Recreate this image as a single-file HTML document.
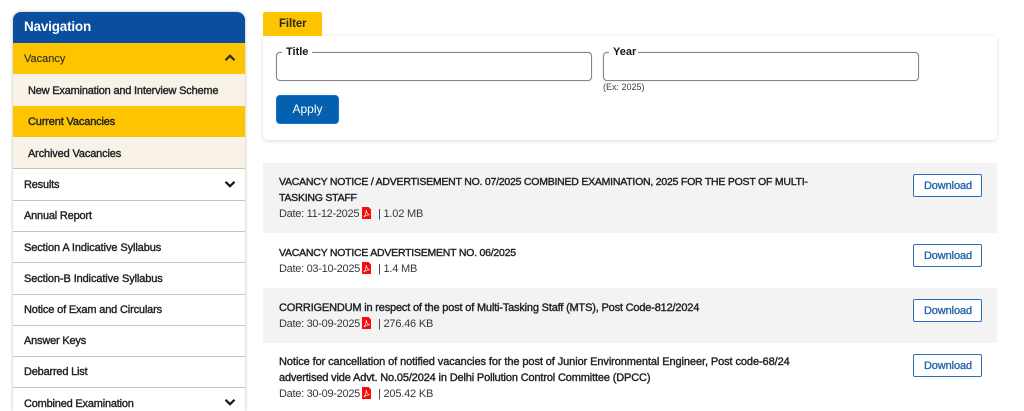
<!DOCTYPE html>
<html lang="en">
<head>
<meta charset="utf-8">
<title>Vacancy</title>
<style>
html,body{margin:0;padding:0;background:#fff}
body{width:1024px;height:411px;overflow:hidden;position:relative;font-family:"Liberation Sans",sans-serif;color:#212529}
.a{position:absolute}
.t{position:absolute;white-space:nowrap;line-height:14px}
.nav{font-size:11px;color:#212529;letter-spacing:-.2px;-webkit-text-stroke:.4px #212529}
.side{position:absolute;left:13px;top:12px;width:232px;height:399px;overflow:hidden;border-radius:8px 8px 0 0;box-shadow:0 0 3px rgba(0,0,0,.3)}
.line{position:absolute;left:13px;width:232px;height:1px;background:#c4c4c4}
.row{position:absolute;left:263px;width:734px}
.ti{font-size:11px;color:#212529;letter-spacing:-.15px;-webkit-text-stroke:.4px #212529}
.caps{font-size:10.5px;letter-spacing:-.23px}
.m{font-size:11px;color:#33383d;letter-spacing:-.29px}
.btn{position:absolute;left:913px;width:66px;height:21px;padding-left:1px;border:1px solid #2f6db5;border-radius:2px;background:#fff;color:#2565ad;font-size:11px;text-align:center;line-height:23px;letter-spacing:-.1px;-webkit-text-stroke:.35px #2565ad;box-sizing:content-box}
.fs{position:absolute;height:27px;width:314px;border:1px solid #80858a;border-radius:4px;background:#fff;box-shadow:0 0 1px rgba(128,133,138,.6)}
.pdf{position:absolute;width:9px;height:12px}
</style>
</head>
<body>

<div class="side"></div>
<div class="a" style="left:13px;top:12px;width:232px;height:31px;background:#0a4f9e;border-radius:8px 8px 0 0"></div>
<div class="t" style="left:24px;top:20px;font-size:13.5px;font-weight:700;color:#fff;letter-spacing:-.2px">Navigation</div>

<div class="a" style="left:13px;top:43px;width:232px;height:31px;background:#ffc400"></div>
<div class="t" style="left:24px;top:52px;font-size:11px;color:#3b3a20;-webkit-text-stroke:.2px #3b3a20">Vacancy</div>
<svg class="a" style="left:224px;top:54px" width="12" height="8" viewBox="0 0 12 8"><path d="M1.500 6.200L6 1.800l4.500 4.400" fill="none" stroke="#2b2a14" stroke-width="2.200"/></svg>

<div class="a" style="left:13px;top:74px;width:232px;height:32px;background:#f9f3e7"></div>
<div class="t nav" style="left:28px;top:84px">New Examination and Interview Scheme</div>
<div class="a" style="left:13px;top:106px;width:232px;height:31px;background:#ffc400"></div>
<div class="t nav" style="left:28px;top:115px;letter-spacing:-.15px">Current Vacancies</div>
<div class="a" style="left:13px;top:137px;width:232px;height:31px;background:#f9f3e7"></div>
<div class="t nav" style="left:28px;top:147px;letter-spacing:-.15px">Archived Vacancies</div>
<div class="line" style="top:168px"></div>

<div class="a" style="left:13px;top:169px;width:232px;height:242px;background:#fff"></div>
<div class="t nav" style="left:24px;top:178px">Results</div>
<svg class="a" style="left:224px;top:180px" width="12" height="8" viewBox="0 0 12 8"><path d="M1.500 1.800L6 6.200l4.500-4.400" fill="none" stroke="#17181a" stroke-width="2.200"/></svg>
<div class="line" style="top:200px"></div>
<div class="t nav" style="left:24px;top:209px">Annual Report</div>
<div class="line" style="top:231px"></div>
<div class="t nav" style="left:24px;top:241px;letter-spacing:-.1px">Section A Indicative Syllabus</div>
<div class="line" style="top:262px"></div>
<div class="t nav" style="left:24px;top:272px;letter-spacing:-.11px">Section-B Indicative Syllabus</div>
<div class="line" style="top:294px"></div>
<div class="t nav" style="left:24px;top:303px;letter-spacing:-.16px">Notice of Exam and Circulars</div>
<div class="line" style="top:325px"></div>
<div class="t nav" style="left:24px;top:334px">Answer Keys</div>
<div class="line" style="top:356px"></div>
<div class="t nav" style="left:24px;top:365px">Debarred List</div>
<div class="line" style="top:387px"></div>
<div class="t nav" style="left:24px;top:397px">Combined Examination</div>
<svg class="a" style="left:224px;top:398px" width="12" height="8" viewBox="0 0 12 8"><path d="M1.500 1.800L6 6.200l4.500-4.400" fill="none" stroke="#17181a" stroke-width="2.200"/></svg>

<div class="a" style="left:263px;top:36px;width:734px;height:104px;background:#fff;border-radius:5px;box-shadow:0 1px 5px rgba(0,0,0,.14)"></div>
<div class="a" style="left:263px;top:12px;width:59px;height:24px;background:#ffc400;border-radius:2px 2px 0 0"></div>
<div class="t" style="left:279px;top:17px;font-size:11.5px;font-weight:700;color:#2b2a14;letter-spacing:-.1px">Filter</div>

<div class="fs" style="left:276px;top:52px"></div>
<div class="a" style="left:282px;top:49px;width:30px;height:6px;background:#fff"></div>
<div class="t" style="left:286px;top:45px;font-size:11px;font-weight:700;color:#17181a">Title</div>
<div class="fs" style="left:603px;top:52px"></div>
<div class="a" style="left:609px;top:49px;width:29px;height:6px;background:#fff"></div>
<div class="t" style="left:613px;top:45px;font-size:11px;font-weight:700;color:#17181a">Year</div>
<div class="t" style="left:603px;top:80px;font-size:9px;color:#3a3f44">(Ex: 2025)</div>
<div class="a" style="left:276px;top:95px;width:61px;height:27px;background:#0660b0;border:1px solid #1a6fd0;border-radius:4px;color:#fff;font-size:12px;text-align:center;line-height:27px">Apply</div>

<div class="row" style="top:163px;height:70px;background:#f3f3f3"></div>
<div class="t ti caps" style="left:279px;top:175px">VACANCY NOTICE / ADVERTISEMENT NO. 07/2025 COMBINED EXAMINATION, 2025 FOR THE POST OF MULTI-</div>
<div class="t ti caps" style="left:279px;top:191px">TASKING STAFF</div>
<div class="t m" style="left:279px;top:207px">Date: 11-12-2025</div>
<svg class="pdf" style="left:362px;top:207px" viewBox="0 0 9 12"><path d="M0 0h6.500L9 2.500V12H0z" fill="#f50d0d"/><path d="M1.800 10c1.200-1.200 2.300-3.500 2.500-7 .4 3.200 1.500 4.500 3.200 4.800-2.200 0-3.800.7-5.700 2.200z" fill="none" stroke="#fff" stroke-width=".65"/></svg>
<div class="t m" style="left:378px;top:207px;letter-spacing:-.2px">| 1.02 MB</div>
<div class="btn" style="top:174px">Download</div>

<div class="t ti caps" style="left:279px;top:246px">VACANCY NOTICE ADVERTISEMENT NO. 06/2025</div>
<div class="t m" style="left:279px;top:262px">Date: 03-10-2025</div>
<svg class="pdf" style="left:362px;top:262px" viewBox="0 0 9 12"><path d="M0 0h6.500L9 2.500V12H0z" fill="#f50d0d"/><path d="M1.800 10c1.200-1.200 2.300-3.500 2.500-7 .4 3.200 1.500 4.500 3.200 4.800-2.200 0-3.800.7-5.700 2.200z" fill="none" stroke="#fff" stroke-width=".65"/></svg>
<div class="t m" style="left:378px;top:262px;letter-spacing:-.2px">| 1.4 MB</div>
<div class="btn" style="top:244px">Download</div>

<div class="row" style="top:288px;height:55px;background:#f3f3f3"></div>
<div class="t ti" style="left:279px;top:301px;letter-spacing:-.18px">CORRIGENDUM in respect of the post of Multi-Tasking Staff (MTS), Post Code-812/2024</div>
<div class="t m" style="left:279px;top:317px">Date: 30-09-2025</div>
<svg class="pdf" style="left:362px;top:317px" viewBox="0 0 9 12"><path d="M0 0h6.500L9 2.500V12H0z" fill="#f50d0d"/><path d="M1.800 10c1.200-1.200 2.300-3.500 2.500-7 .4 3.200 1.500 4.500 3.200 4.800-2.200 0-3.800.7-5.700 2.200z" fill="none" stroke="#fff" stroke-width=".65"/></svg>
<div class="t m" style="left:378px;top:317px;letter-spacing:-.2px">| 276.46 KB</div>
<div class="btn" style="top:299px">Download</div>

<div class="t ti" style="left:279px;top:355px;letter-spacing:-.09px">Notice for cancellation of notified vacancies for the post of Junior Environmental Engineer, Post code-68/24</div>
<div class="t ti" style="left:279px;top:371px;letter-spacing:-.15px">advertised vide Advt. No.05/2024 in Delhi Pollution Control Committee (DPCC)</div>
<div class="t m" style="left:279px;top:387px">Date: 30-09-2025</div>
<svg class="pdf" style="left:362px;top:387px" viewBox="0 0 9 12"><path d="M0 0h6.500L9 2.500V12H0z" fill="#f50d0d"/><path d="M1.800 10c1.200-1.200 2.300-3.500 2.500-7 .4 3.200 1.500 4.500 3.200 4.800-2.200 0-3.800.7-5.700 2.200z" fill="none" stroke="#fff" stroke-width=".65"/></svg>
<div class="t m" style="left:378px;top:387px;letter-spacing:-.2px">| 205.42 KB</div>
<div class="btn" style="top:354px">Download</div>

</body>
</html>
